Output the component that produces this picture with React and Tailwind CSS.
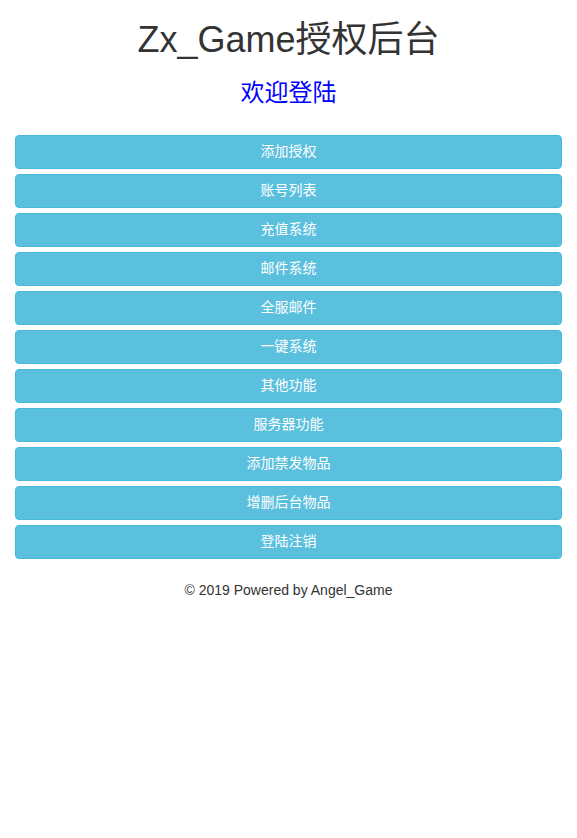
import React from "react";

const menuItems = [
  "添加授权",
  "账号列表",
  "充值系统",
  "邮件系统",
  "全服邮件",
  "一键系统",
  "其他功能",
  "服务器功能",
  "添加禁发物品",
  "增删后台物品",
  "登陆注销",
];

const App = () => {
  return (
    <div
      className="min-h-[838px] bg-white px-[15px] text-[#333] text-sm"
      style={{ fontFamily: '"Liberation Sans", "Noto Sans CJK SC", sans-serif' }}
    >
      <h1 className="mt-5 mb-[10px] text-center text-[36px] leading-[1.1] font-normal">
        Zx_Game授权后台
      </h1>
      <h3 className="mt-5 mb-[10px] text-center text-[24px] leading-[1.1] font-normal text-[#0000ff]">
        欢迎登陆
      </h3>

      {/* menu buttons */}
      <div className="mt-[29px] flex flex-col gap-[5px]">
        {menuItems.map((label) => (
          <button
            key={label}
            type="button"
            className="block w-full h-[34px] rounded border border-[#46b8da] bg-[#5bc0de] text-white text-sm leading-[1.42857]"
          >
            {label}
          </button>
        ))}
      </div>

      <p className="mt-[22px] text-center text-sm leading-[1.42857]">
        © 2019 Powered by Angel_Game
      </p>
    </div>
  );
};

export default App;
